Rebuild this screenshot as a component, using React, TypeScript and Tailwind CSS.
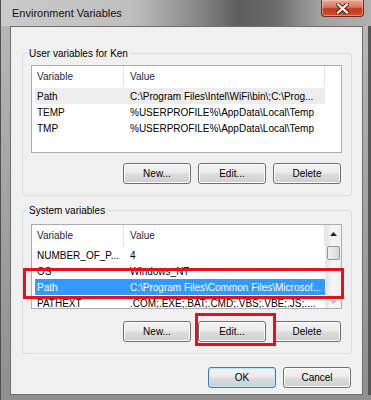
import React from 'react';

const btnBase =
  'flex items-center justify-center rounded-[3px] border text-[10px] text-black bg-[linear-gradient(180deg,#f3f3f3_0%,#ebebeb_48%,#dddddd_52%,#cfcfcf_100%)]';

const Btn = ({ label, def = false }: { label: string; def?: boolean }) => (
  <button
    type="button"
    className={`${btnBase} w-[68px] h-[21px] ${
      def ? 'border-[#3c7fb1] shadow-[inset_0_0_0_1px_#bfe6f7]' : 'border-[#707070] shadow-[inset_0_0_0_1px_#fcfcfc]'
    }`}
  >
    {label}
  </button>
);

type Row = { name: string; value: string; sel?: 'gray' | 'blue' };

const Header = ({ extra }: { extra: boolean }) => (
  <div className="flex h-[21px] bg-white text-[#1e2a3a] shrink-0">
    <div className="w-[92px] pl-[5px] flex items-center border-r border-[#e5e5e5]">Variable</div>
    <div className="w-[201px] pl-[6px] flex items-center border-r border-[#e5e5e5]">Value</div>
    {extra && <div className="flex-1" />}
  </div>
);

const Rows = ({ rows }: { rows: Row[] }) => (
  <div className="pl-[3px] pt-[1px]">
    {rows.map((r) => (
      <div
        key={r.name}
        className={`flex h-[16px] w-[290px] items-center whitespace-nowrap ${
          r.sel === 'blue' ? 'bg-[#3399ff] text-white' : r.sel === 'gray' ? 'bg-[#ededed] text-black' : 'text-black'
        }`}
      >
        <div className="w-[89px] pl-[2px]">{r.name}</div>
        <div className="pl-[6px]">{r.value}</div>
      </div>
    ))}
  </div>
);

const userRows: Row[] = [
  { name: 'Path', value: 'C:\\Program Files\\Intel\\WiFi\\bin\\;C:\\Prog...', sel: 'gray' },
  { name: 'TEMP', value: '%USERPROFILE%\\AppData\\Local\\Temp' },
  { name: 'TMP', value: '%USERPROFILE%\\AppData\\Local\\Temp' },
];

const sysRows: Row[] = [
  { name: 'NUMBER_OF_P...', value: '4' },
  { name: 'OS', value: 'Windows_NT' },
  { name: 'Path', value: 'C:\\Program Files\\Common Files\\Microsof...', sel: 'blue' },
  { name: 'PATHEXT', value: '.COM;.EXE;.BAT;.CMD;.VBS;.VBE;.JS;....' },
];

export default function App() {
  return (
    <div className="relative w-[371px] h-[400px] overflow-hidden font-['Liberation_Sans',Arial,sans-serif] text-[10px] bg-[linear-gradient(180deg,#b9b9b9_0%,#a3a3a3_50%,#8f8f8f_100%)] border-l border-[#505050]">
      {/* title bar */}
      <div className="flex h-[26px] bg-[linear-gradient(90deg,#cacaca_0%,#bfbfbf_35%,#8c8c8c_52%,#5e5e5e_64%,#6a6a6a_74%,#a2a2a2_86%,#b0b0b0_100%)]">
        <div className="pl-[11px] pt-[6px] text-[11px] text-[#111] leading-[14px]">Environment Variables</div>
        <div className="ml-auto mr-[7px] w-[43px] h-[17px] rounded-b-[4px] border border-t-0 border-[#6b2a1e] bg-[linear-gradient(180deg,#e8a795_0%,#d7775f_45%,#c2391c_55%,#d4502c_100%)] flex items-center justify-center shadow-[inset_0_0_0_1px_rgba(255,220,200,0.45)]">
          <svg width="13" height="11" viewBox="0 0 13 11">
            <path d="M2 1.5 L11 9.5 M11 1.5 L2 9.5" stroke="#5a1a10" strokeWidth="4" strokeLinecap="square" />
            <path d="M2 1.5 L11 9.5 M11 1.5 L2 9.5" stroke="#ffffff" strokeWidth="2.2" strokeLinecap="square" />
          </svg>
        </div>
      </div>

      <div className="flex">
        <div className="w-[9px]" />
        {/* client area */}
        <div className="w-[353px] h-[369px] border border-[#6e6e6e] bg-[#f0f0f0] flex flex-col">
          <fieldset className="ml-[11px] mt-[19px] w-[330px] border border-[#d5dfe5] rounded-[3px] px-[4px] pb-[11px]">
            <legend className="px-[2px] leading-[15px] text-black">User variables for Ken</legend>
            <div className="pl-[4px] pr-[5px]">
              <div className="mt-[4px] h-[88px] border border-[#abadb3] bg-white overflow-hidden">
                <Header extra />
                <Rows rows={userRows} />
              </div>
              <div className="mt-[10px] flex justify-end gap-[7px] pr-[1px]">
                <Btn label="New..." />
                <Btn label="Edit..." />
                <Btn label="Delete" />
              </div>
            </div>
          </fieldset>

          <fieldset className="ml-[11px] mt-[7px] w-[330px] border border-[#d5dfe5] rounded-[3px] px-[4px] pb-[11px]">
            <legend className="px-[2px] leading-[15px] text-black">System variables</legend>
            <div className="pl-[4px] pr-[5px]">
              <div className="mt-[6px] h-[85px] border border-[#abadb3] bg-white overflow-hidden flex">
                <div className="w-[293px]">
                  <Header extra={false} />
                  <Rows rows={sysRows} />
                </div>
                <div className="w-[16px] h-full flex flex-col bg-[linear-gradient(90deg,#e3e3e3_0%,#f5f5f5_40%,#f0f0f0_100%)] border-l border-[#ececec]">
                  <div className="h-[17px] flex items-center justify-center">
                    <svg width="7" height="4" viewBox="0 0 7 4">
                      <path d="M0 4 L3.5 0 L7 4 Z" fill="#222" />
                    </svg>
                  </div>
                  <div className="mt-[4px] mx-[1px] h-[14px] rounded-[2px] border border-[#979797] bg-[linear-gradient(90deg,#f1f1f1_0%,#e4e4e4_50%,#d6d6d6_100%)]" />
                  <div className="mt-auto h-[14px] flex items-start justify-center pt-[6px]">
                    <svg width="7" height="4" viewBox="0 0 7 4">
                      <path d="M0 0 L3.5 4 L7 0 Z" fill="#bdbdbd" />
                    </svg>
                  </div>
                </div>
              </div>
              <div className="mt-[12px] flex justify-end gap-[7px] pr-[1px]">
                <Btn label="New..." />
                <Btn label="Edit..." />
                <Btn label="Delete" />
              </div>
            </div>
          </fieldset>

          <div className="mt-[13px] mr-[11px] flex justify-end gap-[7px]">
            <Btn label="OK" def />
            <Btn label="Cancel" />
          </div>
        </div>
        <div className="flex-1 border-r-[3px] border-[#555]" />
      </div>

      {/* red annotation boxes */}
      <div className="absolute left-[22px] top-[268px] w-[321px] h-[31px] border-[3px] border-[#e5121b]" />
      <div className="absolute left-[194px] top-[313px] w-[81px] h-[33px] border-[3px] border-[#e5121b]" />
    </div>
  );
}
